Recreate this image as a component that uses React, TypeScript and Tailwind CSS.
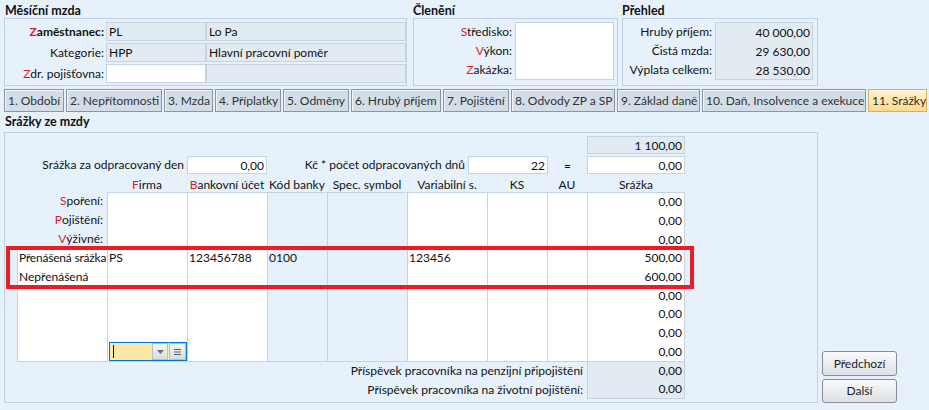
const red = "text-[#e3171e]";

function Field({ children, white, right }: { children?: React.ReactNode; white?: boolean; right?: boolean }) {
  return (
    <div
      className={`h-full border border-[#c4d3e2] px-[2px] leading-[17px] ${white ? "bg-white" : "bg-[#e2eaf2]"} ${right ? "text-right" : ""}`}
    >
      {children}
    </div>
  );
}

const tabs = [
  { label: "1. Období", w: "w-[60px]" },
  { label: "2. Nepřítomnosti", w: "w-[96px]" },
  { label: "3. Mzda", w: "w-[49px]" },
  { label: "4. Příplatky", w: "w-[66px]" },
  { label: "5. Odměny", w: "w-[66px]" },
  { label: "6. Hrubý příjem", w: "w-[90px]" },
  { label: "7. Pojištění", w: "w-[66px]" },
  { label: "8. Odvody ZP a SP", w: "w-[104px]" },
  { label: "9. Základ daně", w: "w-[83px]" },
  { label: "10. Daň, Insolvence a exekuce", w: "w-[164px]" },
  { label: "11. Srážky", w: "w-[59px]", active: true },
];

interface Col {
  w: string;
  bg: string;
  right?: boolean;
  head: React.ReactNode;
  cells: string[];
}

const cols: Col[] = [
  {
    w: "w-[80px]",
    bg: "bg-white",
    head: (
      <>
        <span className={red}>F</span>irma
      </>
    ),
    cells: ["", "", "", "PS", "", "", "", "", ""],
  },
  {
    w: "w-[80px]",
    bg: "bg-white",
    head: (
      <>
        <span className={red}>B</span>ankovní účet
      </>
    ),
    cells: ["", "", "", "123456788", "", "", "", "", ""],
  },
  { w: "w-[60px]", bg: "bg-[#e6f1fc]", head: "Kód banky", cells: ["", "", "", "0100", "", "", "", "", ""] },
  { w: "w-[80px]", bg: "bg-[#e6f1fc]", head: "Spec. symbol", cells: ["", "", "", "", "", "", "", "", ""] },
  { w: "w-[80px]", bg: "bg-white", head: "Variabilní s.", cells: ["", "", "", "123456", "", "", "", "", ""] },
  { w: "w-[60px]", bg: "bg-white", head: "KS", cells: ["", "", "", "", "", "", "", "", ""] },
  { w: "w-[40px]", bg: "bg-white", head: "AU", cells: ["", "", "", "", "", "", "", "", ""] },
  {
    w: "w-[98px]",
    bg: "bg-white",
    right: true,
    head: "Srážka",
    cells: ["0,00", "0,00", "0,00", "500,00", "600,00", "0,00", "0,00", "0,00", "0,00"],
  },
];

function Picker() {
  return (
    <div className="flex h-full w-full border border-[#0078d7] bg-[#fde8a6]">
      <div className="ml-[3px] mt-[2px] h-[13px] w-px bg-[#111]" />
      <div className="flex-1" />
      <div className="flex w-[16px] items-center justify-center border border-[#b9bec5] bg-linear-to-b from-[#f4f5f6] to-[#d9dde2]">
        <svg width="7" height="4" viewBox="0 0 7 4">
          <path d="M0 0h7L3.5 4z" fill="#6b6f75" />
        </svg>
      </div>
      <div className="ml-px flex w-[17px] items-center justify-center border border-[#b9bec5] bg-linear-to-b from-[#f4f5f6] to-[#d9dde2]">
        <svg width="7" height="6" viewBox="0 0 7 6">
          <path d="M0 0.5h7M0 3h7M0 5.5h7" stroke="#5a5e63" strokeWidth="1" />
        </svg>
      </div>
    </div>
  );
}

export default function App() {
  return (
    <div className="relative h-[410px] w-[929px] overflow-hidden bg-[#e6f1fc] font-['Lato','Segoe_UI',sans-serif] text-[12px] text-[#111]">
      {/* top groups */}
      <div className="flex pl-1 pt-[3px]">
        <div className="w-[403px]">
          <div className="h-[15px] pl-[1px] text-[12.5px] font-bold leading-[15px]">Měsíční mzda</div>
          <div className="flex h-[68px] flex-col gap-[2px] border border-[#bfd0e1] pt-[3px]">
            <div className="flex h-[19px]">
              <div className="w-[101px] pr-[2px] text-right font-bold leading-[19px]">
                <span className={red}>Z</span>aměstnanec:
              </div>
              <div className="w-[100px]">
                <Field>PL</Field>
              </div>
              <div className="w-[200px]">
                <Field>Lo Pa</Field>
              </div>
            </div>
            <div className="flex h-[19px]">
              <div className="w-[101px] pr-[2px] text-right leading-[19px]">Kategorie:</div>
              <div className="w-[100px]">
                <Field>HPP</Field>
              </div>
              <div className="w-[200px]">
                <Field>Hlavní pracovní poměr</Field>
              </div>
            </div>
            <div className="flex h-[19px]">
              <div className="w-[101px] pr-[2px] text-right leading-[19px]">
                <span className={red}>Z</span>dr. pojišťovna:
              </div>
              <div className="w-[100px]">
                <Field white />
              </div>
              <div className="w-[200px]">
                <Field />
              </div>
            </div>
          </div>
        </div>

        <div className="ml-[6px] w-[205px]">
          <div className="h-[15px] text-[12.5px] font-bold leading-[15px]">Členění</div>
          <div className="flex h-[68px] border border-[#bfd0e1] pt-[3px]">
            <div className="w-[101px] pr-[3px] text-right leading-[19px]">
              <div>
                <span className={red}>S</span>tředisko:
              </div>
              <div>
                <span className={red}>V</span>ýkon:
              </div>
              <div>
                <span className={red}>Z</span>akázka:
              </div>
            </div>
            <div className="h-[58px] w-[99px] border border-[#c4d3e2] bg-white" />
          </div>
        </div>

        <div className="ml-[4px] w-[196px]">
          <div className="h-[15px] text-[12.5px] font-bold leading-[15px]">Přehled</div>
          <div className="flex h-[68px] border border-[#bfd0e1] pt-[3px]">
            <div className="w-[92px] pr-[3px] text-right leading-[19px]">
              <div>Hrubý příjem:</div>
              <div>Čistá mzda:</div>
              <div>Výplata celkem:</div>
            </div>
            <div className="h-[58px] w-[98px] border border-[#c4d3e2] bg-[#e2eaf2] pr-[2px] text-right leading-[19px]">
              <div>40 000,00</div>
              <div>29 630,00</div>
              <div>28 530,00</div>
            </div>
          </div>
        </div>
      </div>

      {/* tabs */}
      <div className="mt-[3px] flex gap-[2px] pl-1">
        {tabs.map((t) => (
          <div
            key={t.label}
            className={`h-[23px] shrink-0 whitespace-nowrap border pl-[3px] leading-[21px] ${t.w} ${
              t.active
                ? "border-[#d3b25c] bg-linear-to-b from-[#fff4d2] to-[#ffd98a] text-[#2a2a2a]"
                : "border-[#8b96a3] bg-[#d3dde8] text-[#333] shadow-[inset_1px_1px_0_#f3f6f9]"
            }`}
          >
            {t.label}
          </div>
        ))}
      </div>

      <div className="h-[20px] pl-[5px] text-[12.5px] font-bold leading-[20px]">Srážky ze mzdy</div>

      <div className="flex items-end pl-1">
        <div className="h-[271px] w-[814px] border border-[#bfd0e1] pl-[12px] pt-[3px]">
          {/* total */}
          <div className="flex h-[18px]">
            <div className="w-[570px]" />
            <div className="w-[98px]">
              <Field right>1 100,00</Field>
            </div>
          </div>
          {/* per day */}
          <div className="mt-[2px] flex h-[18px]">
            <div className="w-[170px] pr-[3px] text-right leading-[18px]">Srážka za odpracovaný den</div>
            <div className="w-[80px]">
              <Field white right>
                0,00
              </Field>
            </div>
            <div className="w-[201px] pr-[3px] text-right leading-[18px]">Kč * počet odpracovaných dnů</div>
            <div className="w-[80px]">
              <Field white right>
                22
              </Field>
            </div>
            <div className="w-[39px] text-center leading-[20px]">=</div>
            <div className="w-[98px]">
              <Field white right>
                0,00
              </Field>
            </div>
          </div>
          {/* header */}
          <div className="flex h-[18px] items-end">
            <div className="w-[90px]" />
            {cols.map((c, i) => (
              <div key={i} className={`${c.w} whitespace-nowrap text-center leading-[15px]`}>
                {c.head}
              </div>
            ))}
          </div>
          {/* table */}
          <div className="flex h-[170px]">
            <div className="flex w-[90px] flex-col">
              {["Spoření:", "Pojištění:", "Výživné:"].map((l) => (
                <div key={l} className="flex flex-1 items-center justify-end pr-[4px]">
                  <span className={red}>{l[0]}</span>
                  {l.slice(1)}
                </div>
              ))}
              <div className="flex flex-[6] flex-col border-b border-l border-[#c3d3e4] bg-white">
                <div className="flex flex-1 items-center whitespace-nowrap pl-[1px] tracking-[-0.2px]">
                  Přenášená srážka
                </div>
                <div className="flex flex-1 items-center pl-[1px]">Nepřenášená</div>
                <div className="flex-[4]" />
              </div>
            </div>
            {cols.map((c, i) => (
              <div
                key={i}
                className={`flex flex-col border-y border-l border-[#c3d3e4] ${c.w} ${c.bg} ${
                  i === cols.length - 1 ? "border-r" : ""
                }`}
              >
                {c.cells.map((v, j) => (
                  <div
                    key={j}
                    className={`flex flex-1 items-center whitespace-nowrap ${
                      c.right ? "justify-end pr-[2px]" : "pl-[1px]"
                    }`}
                  >
                    {i === 0 && j === 8 ? <Picker /> : v}
                  </div>
                ))}
              </div>
            ))}
          </div>
          {/* footer */}
          <div className="flex h-[37px]">
            <div className="w-[570px] pr-[4px] text-right leading-[18.5px]">
              <div>Příspěvek pracovníka na penzijní připojištění</div>
              <div>Příspěvek pracovníka na životní pojištění:</div>
            </div>
            <div className="w-[98px] border-x border-b border-[#c3d3e4] bg-[#e2eaf2] pr-[2px] text-right leading-[18px]">
              <div>0,00</div>
              <div>0,00</div>
            </div>
          </div>
        </div>

        <div className="ml-[4px] flex w-[75px] flex-col gap-[3px]">
          <button className="h-[25px] rounded-[3px] border border-[#8a8c8f] bg-linear-to-b from-[#fafafa] to-[#dbe1e8] text-[#1c1c1c]">
            Předchozí
          </button>
          <button className="h-[24px] rounded-[3px] border border-[#8a8c8f] bg-linear-to-b from-[#fafafa] to-[#dbe1e8] text-[#1c1c1c]">
            Další
          </button>
        </div>
      </div>

      {/* highlight frame */}
      <div className="pointer-events-none absolute left-[6px] top-[246px] h-[43px] w-[688px] border-4 border-[#ed1c24]" />
    </div>
  );
}
